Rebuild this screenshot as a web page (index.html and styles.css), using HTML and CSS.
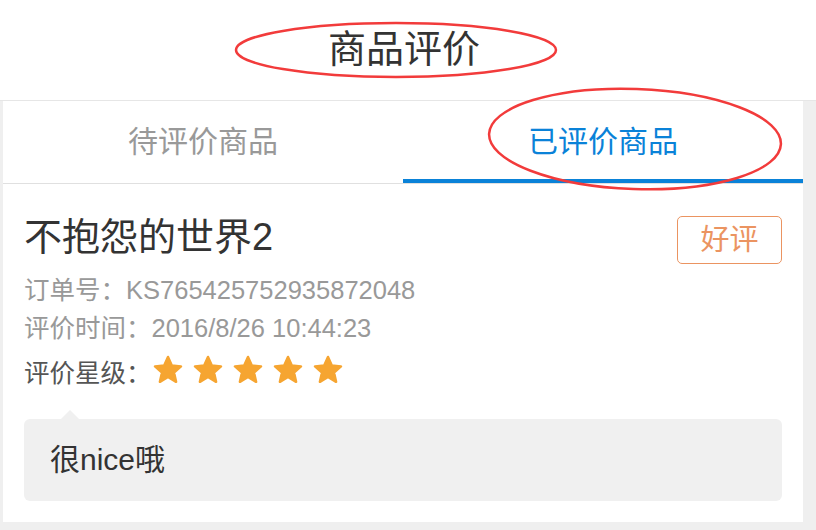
FILE: index.html
```html
<!DOCTYPE html>
<html lang="zh-CN">
  <head>
    <meta charset="UTF-8" />
    <meta name="viewport" content="width=device-width, initial-scale=1.0" />
    <title>商品评价</title>
    <link rel="stylesheet" href="styles.css">
  </head>
  <body>
    <header class="top-bar">
      <h1>商品评价</h1>
    </header>

    <div class="page">
      <div class="card">
        <div class="tabs">
          <div class="tab">待评价商品</div>
          <div class="tab active">已评价商品</div>
        </div>

        <div class="review">
          <div class="review-head">
            <h2 class="book-title">不抱怨的世界2</h2>
            <span class="badge">好评</span>
          </div>
          <p class="info">订单号：KS765425752935872048</p>
          <p class="info">评价时间：2016/8/26 10:44:23</p>
          <div class="rating">
            评价星级：
            <span class="stars">
              <svg class="star" viewBox="0 0 32 32"><path d="M16 3 L19.8 11.6 L29 12.4 L22 18.6 L24.1 27.8 L16 23 L7.9 27.8 L10 18.6 L3 12.4 L12.2 11.6 Z" /></svg>
              <svg class="star" viewBox="0 0 32 32"><path d="M16 3 L19.8 11.6 L29 12.4 L22 18.6 L24.1 27.8 L16 23 L7.9 27.8 L10 18.6 L3 12.4 L12.2 11.6 Z" /></svg>
              <svg class="star" viewBox="0 0 32 32"><path d="M16 3 L19.8 11.6 L29 12.4 L22 18.6 L24.1 27.8 L16 23 L7.9 27.8 L10 18.6 L3 12.4 L12.2 11.6 Z" /></svg>
              <svg class="star" viewBox="0 0 32 32"><path d="M16 3 L19.8 11.6 L29 12.4 L22 18.6 L24.1 27.8 L16 23 L7.9 27.8 L10 18.6 L3 12.4 L12.2 11.6 Z" /></svg>
              <svg class="star" viewBox="0 0 32 32"><path d="M16 3 L19.8 11.6 L29 12.4 L22 18.6 L24.1 27.8 L16 23 L7.9 27.8 L10 18.6 L3 12.4 L12.2 11.6 Z" /></svg>
            </span>
          </div>
          <div class="comment">很nice哦</div>
        </div>
      </div>
    </div>

    <!-- red marks drawn over the screenshot -->
    <svg class="marks" width="816" height="530" viewBox="0 0 816 530">
      <ellipse cx="396" cy="50" rx="160" ry="27" />
      <ellipse cx="635" cy="139" rx="146" ry="50" transform="rotate(2 635 139)" />
    </svg>
  </body>
</html>
```

FILE: styles.css
```css
body {
  font-family: "Liberation Sans", "Noto Sans CJK SC", sans-serif;
  background-color: #efefef;
  margin: 0;
  color: #333;
  position: relative;
}

.top-bar {
  background-color: #fff;
  height: 100px;
  border-bottom: 1px solid #e6e6e6;
  display: flex;
  justify-content: center;
  align-items: center;
}

.top-bar h1 {
  margin: 0 0 10px 0;
  padding-right: 8px;
  font-size: 38px;
  font-weight: normal;
  color: #333;
}

.page {
  padding: 0 13px 8px 3px;
}

.card {
  background-color: #fff;
}

.tabs {
  display: grid;
  grid-template-columns: 1fr 1fr;
  border-bottom: 1px solid #e0e0e0;
}

.tab {
  height: 78px;
  line-height: 82px;
  text-align: center;
  font-size: 30px;
  color: #999;
  border-bottom: 4px solid transparent;
}

.tab.active {
  color: #0a82d8;
  border-bottom-color: #0a82d8;
}

.review {
  padding: 30px 21px 21px 21px;
}

.review-head {
  display: flex;
  justify-content: space-between;
  align-items: flex-start;
}

.book-title {
  margin: 0;
  font-size: 38px;
  font-weight: normal;
  line-height: 46px;
  color: #333;
}

.badge {
  margin-top: 2px;
  width: 103px;
  height: 46px;
  line-height: 46px;
  text-align: center;
  border: 1px solid #eb9461;
  border-radius: 5px;
  color: #eb9461;
  font-size: 29px;
}

.info {
  margin: 0;
  font-size: 25.5px;
  line-height: 38px;
  color: #999;
}

.review-head + .info {
  margin-top: 7px;
}

.rating {
  margin-top: 4px;
  display: flex;
  align-items: center;
  height: 38px;
  font-size: 25.5px;
  color: #555;
}

.stars {
  display: flex;
  gap: 8px;
}

.star {
  width: 32px;
  height: 32px;
}

.star path {
  fill: #f6a531;
  stroke: #f6a531;
  stroke-width: 2.5;
  stroke-linejoin: round;
}

.comment {
  position: relative;
  margin-top: 30px;
  background-color: #f0f0f0;
  border-radius: 6px;
  height: 82px;
  line-height: 82px;
  padding-left: 26px;
  font-size: 30px;
  color: #333;
}

.comment::before {
  content: "";
  position: absolute;
  left: 37px;
  top: -9px;
  border-left: 9px solid transparent;
  border-right: 9px solid transparent;
  border-bottom: 9px solid #f0f0f0;
}

.marks {
  position: absolute;
  left: 0;
  top: 0;
  pointer-events: none;
}

.marks ellipse {
  fill: none;
  stroke: #f23b3b;
  stroke-width: 2.5;
}
```
